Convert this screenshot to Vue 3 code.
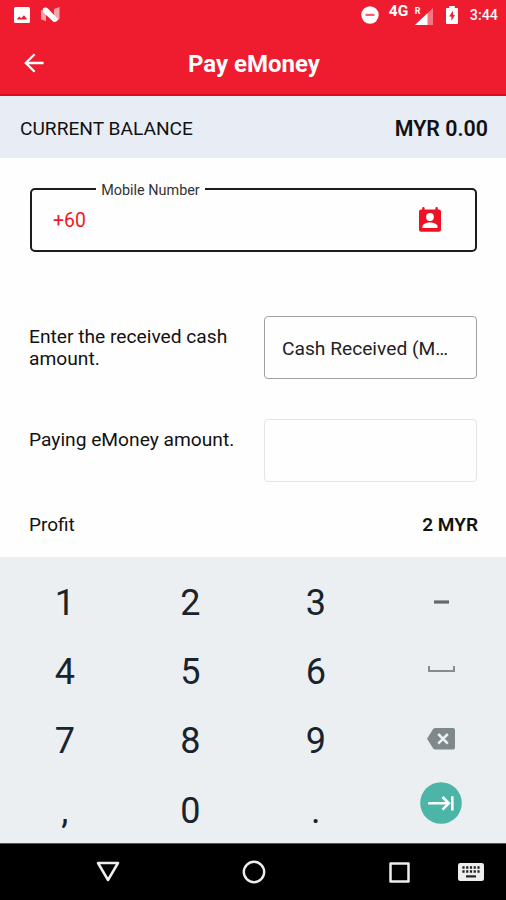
<script setup>
const digits = [
  ['1', '2', '3', 'dash'],
  ['4', '5', '6', 'space'],
  ['7', '8', '9', 'delete'],
  [',', '0', '.', 'next'],
]
const keys = digits.flat()
</script>

<template>
  <div class="screen">
    <header class="top">
      <div class="status">
        <svg class="s-image" width="16" height="16" viewBox="0 0 16 16">
          <rect width="16" height="16" rx="1.5" fill="#fff" />
          <path d="M2.6 12.6 5.4 9.6 7.2 11.2 10 8.2 13.3 12.6Z" fill="#ee1c2e" />
        </svg>
        <svg class="s-n" width="19" height="16" viewBox="0 0 19 16">
          <path d="M0 3.5 5 1V14L0 12.5Z" fill="#fff" opacity=".6" />
          <path d="M13 2 18.5 0V12L13 15Z" fill="#fff" opacity=".6" />
          <path d="M2 1.2Q5 -.4 7.4 2L17.4 12.6Q15.6 15.6 12.4 14.8L2 5Z" fill="#fff" />
        </svg>
        <span class="fill"></span>
        <svg class="s-dnd" width="18" height="18" viewBox="0 0 18 18">
          <circle cx="9" cy="9" r="8.7" fill="#fff" />
          <rect x="4.5" y="7.8" width="9" height="2.2" fill="#f4606b" />
        </svg>
        <span class="net">4G</span>
        <span class="roam">R</span>
        <svg class="s-signal" width="18" height="17" viewBox="0 0 18 17">
          <path d="M0 17 18 0V17Z" fill="#fff" opacity=".4" />
          <path d="M0 17 12.5 5.2V17Z" fill="#fff" />
        </svg>
        <svg class="s-battery" width="12" height="18" viewBox="0 0 12 18">
          <path d="M3.2 0H8.8V2H11Q12 2 12 3V17Q12 18 11 18H1Q0 18 0 17V3Q0 2 1 2H3.2Z" fill="#fff" />
          <path d="M7 4.4 3.2 10.4H5.4V14.8L9 8.9H7Z" fill="#ee1c2e" />
        </svg>
        <span class="clock">3:44</span>
      </div>
      <div class="appbar">
        <svg class="back" width="20" height="20" viewBox="0 0 20 20" fill="none" stroke="#fff" stroke-width="2.3">
          <path d="M19.6 10H2M10.6 1.2 1.8 10 10.6 18.8" />
        </svg>
        <h1>Pay eMoney</h1>
      </div>
    </header>

    <section class="balance">
      <span class="balance-label">CURRENT BALANCE</span>
      <span class="balance-value">MYR 0.00</span>
    </section>

    <main class="form">
      <div class="mobile">
        <label>Mobile Number</label>
        <span class="prefix">+60</span>
        <svg width="22" height="25" viewBox="0 0 22 25">
          <path d="M3.2 2.4V1Q3.2 0 4.4 0T5.6 1V2.4H16.4V1Q16.4 0 17.6 0T18.8 1V2.4H20Q22 2.4 22 4.4V22.8Q22 24.8 20 24.8H2Q0 24.8 0 22.8V4.4Q0 2.4 2 2.4Z" fill="#ee1126" />
          <circle cx="11" cy="10" r="3.9" fill="#fff" />
          <path d="M3.5 21V19.6C3.5 16.8 8 15.6 11 15.6S18.5 16.8 18.5 19.6V21Z" fill="#fff" />
        </svg>
      </div>

      <div class="row cash">
        <p>Enter the received cash amount.</p>
        <div class="box"><span>Cash Received (M…</span></div>
      </div>
      <div class="row paying">
        <p>Paying eMoney amount.</p>
        <div class="box light"></div>
      </div>
      <div class="profit">
        <span class="profit-label">Profit</span>
        <span class="profit-value">2 MYR</span>
      </div>
    </main>

    <section class="keypad">
      <div v-for="k in keys" :key="k" class="key">
        <svg v-if="k === 'dash'" class="k-dash" width="15" height="4" viewBox="0 0 15 4">
          <rect y=".4" width="15" height="3.2" fill="#62696c" />
        </svg>
        <svg v-else-if="k === 'space'" class="k-space" width="27" height="6" viewBox="0 0 27 6" fill="none" stroke="#858c8f" stroke-width="2">
          <path d="M1 0V5H26V0" />
        </svg>
        <svg v-else-if="k === 'delete'" class="k-delete" width="28" height="22" viewBox="0 0 28 22">
          <path d="M8.2 0H26Q28 0 28 2V19.5Q28 21.5 26 21.5H8.2Q6.8 21.5 6 20.3L0 10.7 6 1.2Q6.8 0 8.2 0Z" fill="#7f888b" />
          <path d="M11.2 6 20.8 15.6M20.8 6 11.2 15.6" stroke="#eceff1" stroke-width="2.5" />
        </svg>
        <svg v-else-if="k === 'next'" class="k-next" width="42" height="42" viewBox="0 0 42 42" fill="none">
          <circle cx="21" cy="21" r="20.8" fill="#4cb5a8" />
          <path d="M8.2 21.3H28M22.5 15 28.8 21.3 22.5 27.6M32.3 14.2V28.4" stroke="#fff" stroke-width="2.6" />
        </svg>
        <span v-else>{{ k }}</span>
      </div>
    </section>

    <nav class="nav">
      <svg class="n-back" width="24" height="22" viewBox="0 0 24 22" fill="none" stroke="#eee" stroke-width="2.5" stroke-linejoin="round">
        <path d="M2 2H22L12 19Z" />
      </svg>
      <svg class="n-home" width="24" height="24" viewBox="0 0 24 24" fill="none" stroke="#eee" stroke-width="2.4">
        <circle cx="12" cy="12" r="10.2" />
      </svg>
      <svg class="n-recent" width="21" height="21" viewBox="0 0 21 21" fill="none" stroke="#eee" stroke-width="2.5" stroke-linejoin="round">
        <rect x="1.5" y="1.5" width="18" height="18" />
      </svg>
      <svg class="n-kbd" width="26" height="18" viewBox="0 0 26 18">
        <rect width="26" height="18" rx="2.2" fill="#eee" />
        <path d="M4.4 4.4H21.6M4.4 8.4H21.6" stroke="#222" stroke-width="2.5" stroke-dasharray="2.2 1.55" />
        <path d="M8 13.4H18" stroke="#222" stroke-width="2.2" />
      </svg>
    </nav>
  </div>
</template>

<style>
body {
  margin: 0;
}
</style>

<style scoped>
.screen {
  width: 506px;
  height: 900px;
  display: flex;
  flex-direction: column;
  overflow: hidden;
  background: #fefefe;
  font-family: Roboto, "Liberation Sans", sans-serif;
  color: #111;
}
svg {
  display: block;
  flex: none;
}
.top {
  box-sizing: border-box;
  height: 96px;
  background: #ee1c2e;
  border-bottom: 2px solid #dc0a18;
  color: #fff;
}
.status {
  display: flex;
  align-items: center;
  height: 30px;
  padding: 0 8px 0 14px;
}
.s-n {
  margin-left: 11px;
}
.fill {
  flex: 1;
}
.net {
  margin: 0 0 8px 10px;
  width: 21px;
  font-size: 15.5px;
  font-weight: 700;
  line-height: 16px;
}
.roam {
  margin: 0 -6px 9px 5px;
  width: 6px;
  font-size: 9px;
  font-weight: 700;
  line-height: 10px;
}
.s-signal {
  margin-top: 3px;
}
.s-battery {
  margin-left: 13px;
}
.clock {
  margin-left: 12px;
  font-size: 14.3px;
  font-weight: 500;
}
.appbar {
  display: grid;
  grid-template-columns: 48px 1fr 46px;
  align-items: center;
  height: 66px;
}
.back {
  margin-left: 24px;
}
h1 {
  margin: 2px 0 0;
  text-align: center;
  font-size: 24px;
  font-weight: 700;
}
.balance {
  display: flex;
  justify-content: space-between;
  align-items: center;
  height: 62px;
  padding: 3px 18px 0 20px;
  box-sizing: border-box;
  background: #e8edf5;
}
.balance-label {
  font-size: 19.15px;
}
.balance-value {
  font-size: 21.4px;
  font-weight: 600;
}
.form {
  height: 399px;
  padding: 30px 29px 0 30px;
  box-sizing: border-box;
}
.mobile {
  position: relative;
  display: flex;
  justify-content: space-between;
  align-items: center;
  height: 64px;
  box-sizing: border-box;
  padding: 0 34px 2px 21px;
  border: 2px solid #1c1c1c;
  border-radius: 5px;
}
.mobile label {
  position: absolute;
  left: 64px;
  top: -8px;
  width: 109px;
  background: #fefefe;
  text-align: center;
  font-size: 14.4px;
  line-height: 17px;
  color: #333;
}
.prefix {
  font-size: 19.4px;
  color: #f01824;
  padding-top: 2px;
}
.row {
  display: flex;
  justify-content: space-between;
}
.row p {
  width: 212px;
  margin: 10px 0 0 -1px;
  font-size: 19.2px;
  line-height: 22px;
}
.cash {
  margin-top: 64px;
}
.paying {
  margin-top: 40px;
}
.box {
  box-sizing: border-box;
  display: flex;
  align-items: center;
  width: 213px;
  height: 63px;
  padding: 2px 0 0 17px;
  border: 1.5px solid #a0a0a0;
  border-radius: 4px;
  font-size: 19.2px;
  white-space: nowrap;
  color: #222;
}
.box.light {
  border-color: #e4e4e4;
}
.profit {
  display: flex;
  justify-content: space-between;
  margin: 32px -1px 0;
  line-height: 22px;
  font-size: 19px;
}
.profit-value {
  font-weight: 600;
}
.keypad {
  display: grid;
  grid-template-columns: repeat(4, 125.5px);
  grid-template-rows: repeat(4, 69.3px);
  height: 286px;
  box-sizing: border-box;
  padding: 10px 2px 0;
  background: #eceff1;
  overflow: hidden;
}
.key {
  display: flex;
  align-items: center;
  justify-content: center;
  font-size: 36px;
  line-height: 40px;
  color: #17242e;
}
.key span {
  padding-top: 2px;
}
.k-space {
  margin-bottom: 3px;
}
.k-delete {
  margin-bottom: 2px;
}
.k-next {
  margin-bottom: 14px;
}
.nav {
  flex: 1;
  display: flex;
  align-items: center;
  padding-left: 96px;
  border-top: 1px solid #555;
  background: #000;
}
.n-home {
  margin-left: 122px;
}
.n-recent {
  margin-left: 123px;
}
.n-kbd {
  margin-left: 48px;
}
</style>
